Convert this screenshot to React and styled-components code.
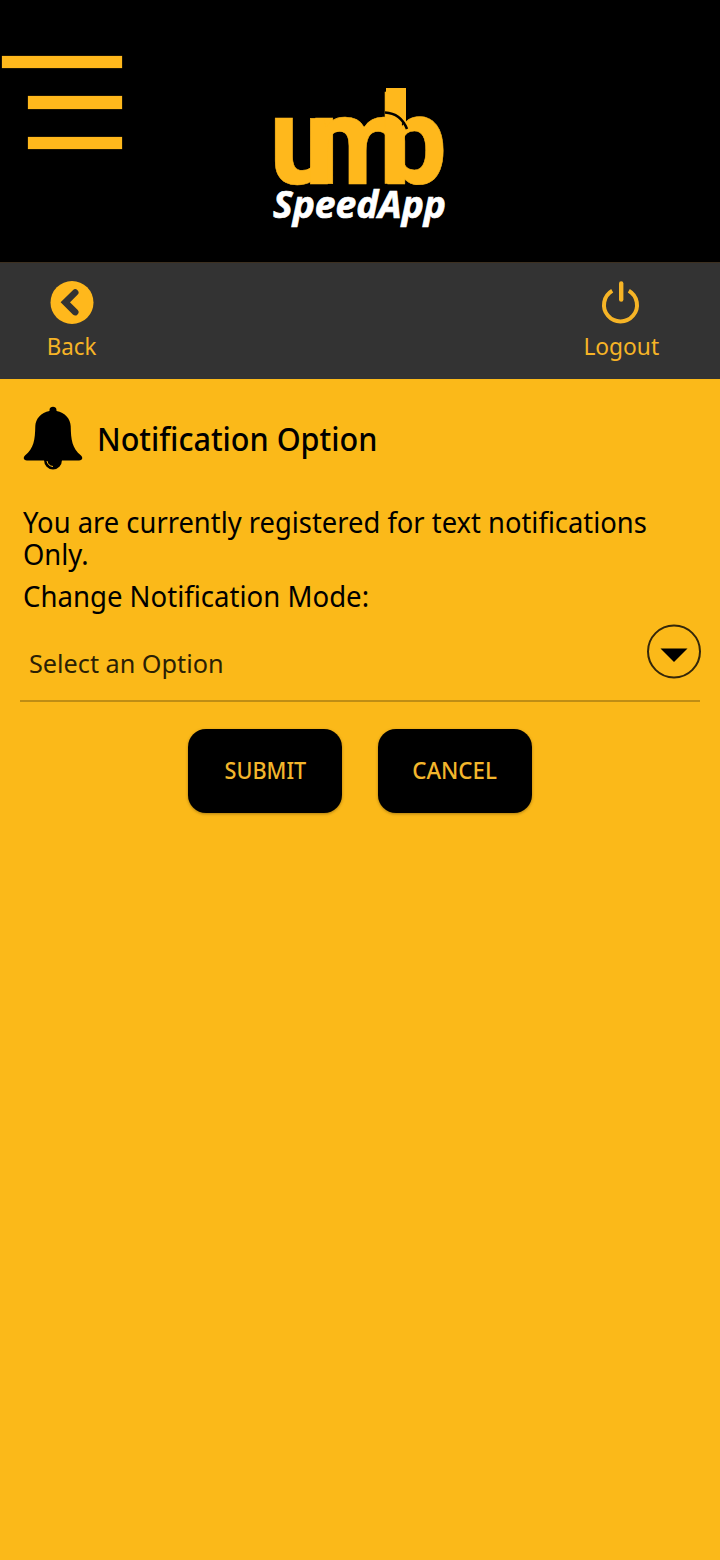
import React from "react";
import styled, { createGlobalStyle } from "styled-components";

const GlobalStyle = createGlobalStyle`
  * { box-sizing: border-box; }
  body { margin: 0; background: #fbb919; font-family: "Noto Sans", "Open Sans", sans-serif; }
  button { font-family: inherit; border: 0; padding: 0; background: none; }
`;

const Screen = styled.div`
  width: 720px;
  min-height: 1560px;
  background: #fbb919;
  color: #000;
`;

const Header = styled.header`
  height: 262px;
  background: #000;
  display: grid;
  grid-template-columns: 140px 1fr 140px;
`;

const MenuButton = styled.button`
  display: flex;
  flex-direction: column;
  align-items: flex-end;
  gap: 28px;
  width: 122px;
  height: 149px;
  padding-top: 56px;
`;

const MenuBar = styled.span`
  width: ${(p) => p.$width}px;
  height: 12.4px;
  flex: none;
  background: #ffb81c;
  box-shadow: 0 0 1px #b07c10;
`;

const Logo = styled.svg`
  display: block;
  width: 200px;
  height: 165px;
  margin: 75px auto 0;
`;

const NavBar = styled.nav`
  height: 117px;
  background: #333;
  border-top: 1px solid #3d3020;
  display: flex;
  justify-content: space-between;
  padding: 17px 49px 0 22px;
`;

const NavItem = styled.button`
  width: ${(p) => p.$width}px;
  display: flex;
  flex-direction: column;
  align-items: center;
  color: #f6b426;
  font-size: 23px;
  line-height: 30px;
  gap: 5px;
`;

const NavIcon = styled.svg`
  width: 46px;
  height: 46px;
  display: block;
`;

const Fit = styled.span`
  display: block;
  width: max-content;
  transform: scaleX(${(p) => p.$x});
  transform-origin: ${(p) => p.$origin || "left"} center;
`;

const Content = styled.main`
  padding: 27px 20px 0;
`;

const TitleRow = styled.div`
  display: flex;
  align-items: center;
  gap: 14px;
  height: 64px;
  padding-left: 3px;
`;

const BellIcon = styled.svg`
  width: 60px;
  height: 64px;
  display: block;
`;

const Title = styled.h1`
  margin: 0;
  padding-top: 2px;
  font-size: 32.5px;
  line-height: 44px;
  font-weight: 500;
`;

const Paragraph = styled.p`
  margin: ${(p) => p.$top}px 0 0 3px;
  font-size: 28.5px;
  line-height: 32px;
`;

const SelectField = styled.div`
  margin-top: 12px;
  height: 78px;
  display: flex;
  justify-content: space-between;
  padding-left: 9px;
  border-bottom: 2px solid #bf8d14;
  color: #2b1f05;
`;

const SelectLabel = styled.div`
  padding-top: 21px;
  font-size: 25.5px;
  line-height: 36px;
`;

const SelectIcon = styled.svg`
  width: 56px;
  height: 56px;
  margin-right: -2px;
`;

const Actions = styled.div`
  display: flex;
  justify-content: center;
  gap: 36px;
  margin-top: 27px;
`;

const ActionButton = styled.button`
  width: 154px;
  height: 84px;
  border-radius: 18px;
  background: #000;
  color: #f3b62c;
  box-shadow: 0 1px 3px rgba(60, 40, 0, 0.4);
  font-size: 23.5px;
  line-height: 32px;
  font-weight: 500;
  display: flex;
  align-items: center;
  justify-content: center;
  padding-bottom: 2px;
`;

function BrandLogo() {
  return (
    <Logo viewBox="260 75 200 165" role="img" aria-label="umb SpeedApp">
      <text
        transform="translate(267.2 184) scale(0.94 1)"
        dx="0 1 4"
        fill="#ffb81c"
        stroke="#ffb81c"
        strokeWidth="0.6"
        fontFamily="Noto Sans"
        fontWeight="700"
        fontSize="121"
        letterSpacing="-42.5"
      >
        umb
      </text>
      <rect x="386" y="88" width="20" height="34" fill="#ffb81c" />
      <path d="M385 112.5 C395 113 403 119 407 129" fill="none" stroke="#000" strokeWidth="2.6" />
      <text
        x="273"
        y="217.5"
        fill="#fff"
        stroke="#fff"
        strokeWidth="0.7"
        fontFamily="Noto Sans"
        fontWeight="700"
        fontStyle="italic"
        fontSize="37"
        textLength="173"
        lengthAdjust="spacingAndGlyphs"
      >
        SpeedApp
      </text>
    </Logo>
  );
}

export default function App() {
  return (
    <Screen>
      <GlobalStyle />
      <Header>
        <MenuButton aria-label="Menu">
          <MenuBar $width={120} />
          <MenuBar $width={94} />
          <MenuBar $width={94} />
        </MenuButton>
        <BrandLogo />
      </Header>
      <NavBar>
        <NavItem $width={100}>
          <NavIcon viewBox="0 0 46 46">
            <circle cx="23" cy="22.5" r="21.5" fill="#ffb81c" />
            <path d="M26.2 12.5 L16.3 22.3 L26.2 32.1" fill="none" stroke="#333" strokeWidth="6.6" strokeLinecap="round" />
          </NavIcon>
          <Fit $x={0.97} $origin="center">Back</Fit>
        </NavItem>
        <NavItem $width={100}>
          <NavIcon viewBox="0 0 46 46">
            <path d="M14.2 10.7 A16.5 16.5 0 1 0 30.8 10.7" fill="none" stroke="#f6b426" strokeWidth="4" />
            <path d="M23.2 3.5 V19.5" fill="none" stroke="#f6b426" strokeWidth="4.4" strokeLinecap="round" />
          </NavIcon>
          <Fit $x={0.99} $origin="center">Logout</Fit>
        </NavItem>
      </NavBar>
      <Content>
        <TitleRow>
          <BellIcon viewBox="0 0 60 64">
            <path d="M26.5 5 V4 C26.5 -.3 33.5 -.3 33.5 4 V5 C42 6.5 47.5 13 47.7 20 C48 34 49 42 58 49.5 C60.5 52 59 54.5 56 54.5 H4 C1 54.5 -.5 52 2 49.5 C11 42 12 34 12.3 20 C12.5 13 18 6.5 26.5 5 Z" />
            <path d="M21 54 A9 9.5 0 0 0 39 54 Z" />
            <path d="M24 55 Q25 60 30 60.5" fill="none" stroke="#fbb919" strokeWidth="1" />
          </BellIcon>
          <Title><Fit $x={0.94}>Notification Option</Fit></Title>
        </TitleRow>
        <Paragraph $top={36}>
          <Fit $x={0.96}>You are currently registered for text notifications</Fit>
          <Fit $x={0.96}>Only.</Fit>
        </Paragraph>
        <Paragraph $top={10}><Fit $x={0.967}>Change Notification Mode:</Fit></Paragraph>
        <SelectField>
          <SelectLabel><Fit $x={0.989}>Select an Option</Fit></SelectLabel>
          <SelectIcon viewBox="0 0 56 56">
            <circle cx="28" cy="27.5" r="26" fill="none" stroke="#34270a" strokeWidth="2" />
            <path d="M14.5 24.5 H41.5 L28 38 Z" fill="#000" />
          </SelectIcon>
        </SelectField>
        <Actions>
          <ActionButton><Fit $x={0.92} $origin="center">SUBMIT</Fit></ActionButton>
          <ActionButton><Fit $x={0.95} $origin="center">CANCEL</Fit></ActionButton>
        </Actions>
      </Content>
    </Screen>
  );
}
